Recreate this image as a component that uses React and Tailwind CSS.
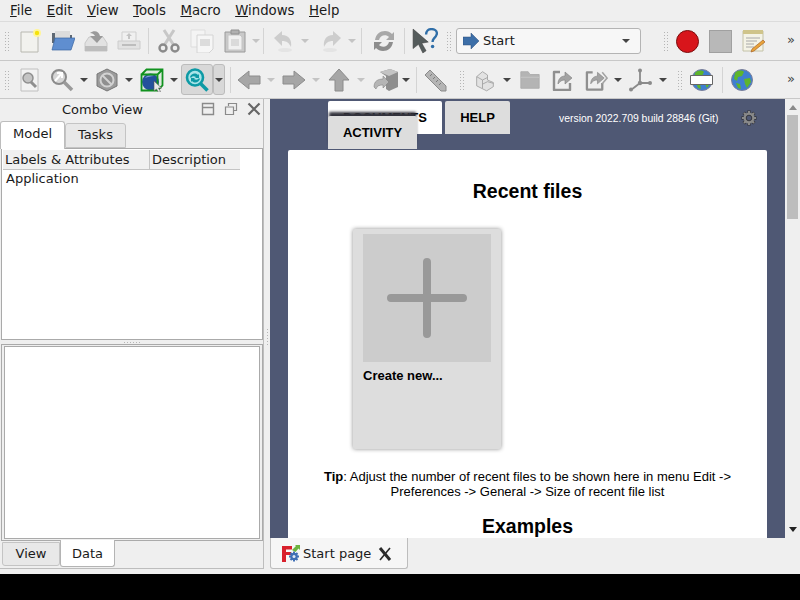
const Slot = ({ className = "w-[33px]", children }) => (
  <div className={`flex shrink-0 items-center justify-center ${className}`}>{children}</div>
);

const Grip = ({ className = "w-[13px]" }) => (
  <Slot className={className}>
    <div className="h-[20px] w-[5px] bg-[radial-gradient(#b5b5b5_1px,transparent_1px)] bg-[length:3px_3px]" />
  </Slot>
);

const Sep = ({ className = "w-[7px]" }) => (
  <Slot className={className}>
    <div className="h-[26px] w-px bg-[#d4d4d4]" />
  </Slot>
);

const Arrow = ({ className = "w-[9px]", light = false }) => (
  <Slot className={className}>
    <div
      className={`h-0 w-0 border-x-[4px] border-t-[4px] border-x-transparent ${
        light ? "border-t-[#c4c4c4]" : "border-t-[#444444]"
      }`}
    />
  </Slot>
);

const Svg = ({ children, w = 24, h = 24 }) => (
  <svg width={w} height={h} viewBox="0 0 24 24">{children}</svg>
);

const NewIcon = () => (
  <Svg>
    <path d="M3 3h17v20H3z" fill="#f2f2ee" stroke="#b8b8b0" />
    <circle cx="19" cy="4" r="4" fill="#fff59a" />
    <circle cx="19" cy="4" r="2.200" fill="#f5e20a" />
  </Svg>
);
const OpenIcon = () => (
  <Svg>
    <path d="M1 4h8l2 2h10v8H1z" fill="#5e6874" />
    <path d="M4 2h15v10H4z" fill="#dcdcdc" />
    <path d="M1 21 4 9h20l-4 12z" fill="#5f8ed0" stroke="#3b65a0" strokeWidth=".7" />
  </Svg>
);
const SaveIcon = () => (
  <Svg>
    <path d="M1 14 5 8h14l4 6v8H1z" fill="#e2e2e2" stroke="#c8c8c8" />
    <path d="M1 17h22v5H1z" fill="#bdbdbd" />
    <path d="M6 4c4-3 9-2 10 3l3 0-6 7-7-7h5c-1-2-3-3-5-3z" fill="#9a9a9a" />
  </Svg>
);
const PrintIcon = () => (
  <Svg>
    <path d="M5 3h14v10H5z" fill="#f0f0f0" stroke="#cfcfcf" />
    <path d="M12 4l3 3h-2v3h-2V7H9z" fill="#c4c4c4" />
    <path d="M1 12h22v8H1z" fill="#e2e2e2" stroke="#cccccc" />
    <path d="M5 15h14v2H5z" fill="#bdbdbd" />
  </Svg>
);
const CutIcon = () => (
  <Svg>
    <path d="M7 1l9 14M17 1 8 15" stroke="#c7c7c7" strokeWidth="3" fill="none" />
    <circle cx="6" cy="19" r="3.500" fill="none" stroke="#8a8a8a" strokeWidth="2.400" />
    <circle cx="18" cy="19" r="3.500" fill="none" stroke="#8a8a8a" strokeWidth="2.400" />
  </Svg>
);
const CopyIcon = () => (
  <Svg>
    <path d="M1 1h14v17H1z" fill="#f4f4f4" stroke="#dddddd" />
    <path d="M7 6h16v14l-4 4H7z" fill="#f6f6f6" stroke="#d4d4d4" />
    <path d="M10 10h10v7H10z" fill="#dcdcdc" />
  </Svg>
);
const PasteIcon = () => (
  <Svg>
    <path d="M2 3h20v20H2z" fill="#c9c9c9" stroke="#9a9a9a" />
    <path d="M5 6h12l2 2v13H5z" fill="#f0f0f0" stroke="#c5c5c5" />
    <path d="M8 1h8v4H8z" fill="#b0b0b0" stroke="#909090" />
    <path d="M8 10h8v7H8z" fill="#dadada" />
  </Svg>
);
const UndoIcon = ({ flip = false }) => (
  <Svg>
    <g transform={flip ? "translate(24 0) scale(-1 1)" : undefined}>
      <path d="M2 9 10 2v4c7 0 10 5 9 12-2-4-4-6-9-6v5z" fill="#cdcdcd" />
      <ellipse cx="13" cy="21" rx="7" ry="2" fill="#e4e4e4" />
    </g>
  </Svg>
);
const RefreshIcon = () => (
  <Svg>
    <path d="M3 11C4 5 8 2 13 2c3 0 5 1 7 3l2-2v8h-8l3-3c-3-3-9-2-10 3z" fill="#a8a8a8" />
    <path d="M21 13c-1 6-5 9-10 9-3 0-5-1-7-3l-2 2v-8h8l-3 3c3 3 9 2 10-3z" fill="#8d8d8d" />
  </Svg>
);
const WhatsThis = () => (
  <Svg w={26} h={26}>
    <path d="M1 1 1 19l5-4 4 8 3-2-4-7 6-1z" fill="#555c5c" stroke="#3d3d3d" strokeWidth=".5" />
    <path d="M13 6c0-3 2-5 5-5s5 2 5 4-1 3-3 5c-1 1-1 2-1 3" fill="none" stroke="#2f6ea8" strokeWidth="2.200" />
    <circle cx="19" cy="17" r="1.600" fill="#2f6ea8" />
  </Svg>
);
const StartArrow = () => (
  <svg width="16" height="16" viewBox="0 0 16 16">
    <path d="M0 4h8V0l8 8-8 8v-4H0z" fill="#3d6fa8" stroke="#2d4f7a" strokeWidth=".5" />
  </svg>
);
const MacroIcon = () => (
  <Svg>
    <path d="M1 2h20v20H1z" fill="#f4f3e6" stroke="#c4c2a8" />
    <path d="M1 1h20v4H1z" fill="#cfc48a" />
    <path d="M4 9h14M4 12h11M4 15h8M4 18h8" stroke="#a8a8a8" />
    <path d="M10 20 21 11l2 2-11 9-3 1z" fill="#e8a33a" stroke="#a0561c" strokeWidth=".6" />
  </Svg>
);
const FitAll = () => (
  <Svg>
    <path d="M3 1h17v22H3z" fill="#f2f2f2" stroke="#c0c0c0" />
    <circle cx="10" cy="10" r="5" fill="#c4c4c4" stroke="#8f8f8f" strokeWidth="1.500" />
    <path d="M13 14l5 5" stroke="#8f8f8f" strokeWidth="3" />
  </Svg>
);
const ZoomSel = () => (
  <Svg>
    <circle cx="9" cy="9" r="7" fill="#d6d6d6" stroke="#8b8b8b" strokeWidth="2" />
    <path d="M14 14l8 8" stroke="#9a9a9a" strokeWidth="3.500" />
    <path d="M5 13 12 5M7 5h5v5" stroke="#fff" strokeWidth="2" fill="none" />
  </Svg>
);
const NoIcon = () => (
  <Svg>
    <path d="M12 1 22 6v12l-10 5-10-5V6z" fill="#9b9b9b" stroke="#777777" />
    <circle cx="12" cy="12" r="6.500" fill="#8f8f8f" stroke="#d2d2d2" strokeWidth="2" />
    <path d="M7.500 7.500l9 9" stroke="#d2d2d2" strokeWidth="2" />
  </Svg>
);
const CubeIcon = () => (
  <Svg>
    <path d="M1.500 6.500l5-5h16v16l-5 5h-16z" fill="#dfeadf" />
    <circle cx="10.500" cy="14" r="8.500" fill="#24509c" />
    <path d="M5 10c2-3 6-4 9-2-3 0-6 1-9 2z" fill="#7b9bd8" />
    <path d="M1.500 6.500h16v16h-16zM1.500 6.500l5-5h16v16l-5 5M17.500 6.500l5-5" stroke="#11921f" strokeWidth="1.800" fill="none" />
    <path d="M14 13v10l2.500-2 2 3.500 2-1-2-3.500h3z" fill="#e8e8e8" stroke="#555" strokeWidth=".6" />
  </Svg>
);
const SyncIcon = () => (
  <Svg>
    <circle cx="10" cy="9.500" r="8" fill="#a8e4e8" stroke="#0d9aa5" strokeWidth="2.600" />
    <path d="M5 9c1-3 5-5 8-2l1-1v4h-4l1-1c-2-1-4-1-5 1z" fill="#0d9aa5" />
    <path d="M15 11c-1 3-5 5-8 2l-1 1v-4h4l-1 1c2 1 4 1 5-1z" fill="#0d9aa5" />
    <path d="M15.500 15.500l7 7" stroke="#0d9aa5" strokeWidth="3.600" />
  </Svg>
);
const NavArrow = ({ d }) => (
  <Svg>
    <path d={d} fill="#a6a6a6" stroke="#8c8c8c" />
  </Svg>
);
const ViewBox = () => (
  <Svg w={26} h={24}>
    <path d="M7 4l10-3 8 3v15l-9 4-3-2V8z" fill="#8e8e8e" />
    <path d="M7 4l9 4 9-4-8-3z" fill="#c4c4c4" />
    <path d="M1 19c0-6 4-8 9-8V8l6 6-6 6v-3c-4 0-6 1-7 4z" fill="#b5b5b5" stroke="#777" strokeWidth=".5" />
  </Svg>
);
const Ruler = () => (
  <Svg>
    <path d="M2 7 7 2l16 16v5h-5z" fill="#b4b4b4" stroke="#8b8b8b" />
    <path d="M7 8l2-2M10 11l2-2M13 14l2-2M16 17l2-2" stroke="#7c7c7c" />
  </Svg>
);
const PartIcon = () => (
  <Svg>
    <path d="M2 8l7-6 6 4v6l7 3v5l-8 5-12-6z" fill="#e2e2e2" stroke="#9f9f9f" />
    <path d="M2 8l7 4v10M9 12l6-3M9 17l6-3 7 2" stroke="#9f9f9f" fill="none" />
  </Svg>
);
const FolderIcon = () => (
  <Svg>
    <path d="M2 3h8l2 3h10v15H2z" fill="#b4b4b4" stroke="#adadad" />
    <path d="M2 9h20" stroke="#c8c8c8" />
  </Svg>
);
const LinkIcon = ({ double = false }) => (
  <svg width={double ? 24 : 22} height="22" viewBox={double ? "0 0 24 22" : "0 0 22 22"}>
    <path d="M8 3H2v18h16v-7" fill="none" stroke="#8f8f8f" strokeWidth="2.400" strokeLinejoin="round" />
    <path d="M6 15c0-5 3-8 7-8V3l7 6-7 6v-4c-3 0-5 1-7 4z" fill="#a3a3a3" stroke="#7e7e7e" strokeWidth=".6" />
    {double && <path d="M18 3l5 6-5 6" fill="none" stroke="#a3a3a3" strokeWidth="1.600" />}
  </svg>
);
const AxisIcon = () => (
  <Svg>
    <path d="M12 2v13L3 22M12 15l10 0" fill="none" stroke="#8a8a8a" strokeWidth="1.800" />
    <circle cx="12" cy="2.500" r="2" fill="#8a8a8a" />
    <circle cx="12" cy="15" r="2.200" fill="#8a8a8a" />
    <circle cx="3" cy="21.500" r="2" fill="#8a8a8a" />
    <circle cx="22" cy="15" r="2" fill="#8a8a8a" />
  </Svg>
);
const Globe = ({ label = false }) => (
  <Svg>
    <circle cx="12" cy="12" r="10.500" fill="#3f7fd0" stroke="#7a7f9a" />
    <path d="M5 5c3-3 7-3 9-1l-2 4-4 1-1 4-3-2zM14 11l6-1 1 4-4 6-2-4zM6 15l4 1 1 5-3-1z" fill="#5eb52c" />
    {label && <path d="M0.500 7.500h22v9h-22z" fill="#fff" stroke="#666" />}
  </Svg>
);
const Gear = () => (
  <svg width="16" height="16" viewBox="0 0 16 16">
    <path d="M8 .500v15M.500 8h15M2.700 2.700l10.600 10.600M13.300 2.700 2.700 13.300" stroke="#303036" strokeWidth="3.400" />
    <path d="M8 1v14M1 8h14M3 3l10 10M13 3 3 13" stroke="#8a8a8a" strokeWidth="2.200" />
    <circle cx="8" cy="8" r="5.500" fill="#8a8a8a" />
    <circle cx="8" cy="8" r="2.800" fill="#4f5874" stroke="#303036" strokeWidth=".9" />
  </svg>
);
const AppLogo = () => (
  <svg width="18" height="17" viewBox="0 0 18 17">
    <path d="M0 1h10v3.500H4V7h5v3H4v7H0z" fill="#d8202c" />
    <path d="M12 6.500v10M7 11.500h10M8.500 8l7 7M15.500 8l-7 7" stroke="#3f6fb5" strokeWidth="2" />
    <circle cx="12" cy="11.500" r="3.700" fill="#3f6fb5" />
    <circle cx="12" cy="11.500" r="1.500" fill="#dfe8f5" />
    <path d="M10 5l4-4-1-1h5v5l-1.500-1.500L13.500 7z" fill="#6cb33f" />
  </svg>
);

const Toolbar1 = () => (
  <div className="flex h-[39px] items-center border-b border-[#c8c8c8]">
    <Grip />
    <Slot><NewIcon /></Slot>
    <Slot><OpenIcon /></Slot>
    <Slot><SaveIcon /></Slot>
    <Slot><PrintIcon /></Slot>
    <Sep />
    <Slot><CutIcon /></Slot>
    <Slot><CopyIcon /></Slot>
    <Slot><PasteIcon /></Slot>
    <Arrow light />
    <Sep />
    <Slot><UndoIcon /></Slot>
    <Arrow light />
    <Slot className="ml-[5px] w-[33px]"><UndoIcon flip /></Slot>
    <Arrow light />
    <Sep className="w-[11px]" />
    <Slot><RefreshIcon /></Slot>
    <Sep className="w-[8px]" />
    <Slot><WhatsThis /></Slot>
    <Grip className="w-[15px]" />
    <div className="flex h-[26px] w-[185px] shrink-0 items-center rounded-[3px] border border-[#b4b4b4] bg-[#f7f7f7] pl-[6px] pr-[10px]">
      <StartArrow />
      <span className="ml-[4px] flex-1">Start</span>
      <div className="h-0 w-0 border-x-[4px] border-t-[4px] border-x-transparent border-t-[#444444]" />
    </div>
    <Grip className="ml-[18px] w-[12px]" />
    <Slot>
      <div className="size-[23px] rounded-full border border-[#7c0d0d] bg-[#d8151b]" />
    </Slot>
    <Slot>
      <div className="size-[23px] border border-[#a0a0a0] bg-[#b8b8b8]" />
    </Slot>
    <Slot><MacroIcon /></Slot>
    <span className="mb-[2px] ml-auto mr-[5px] text-[#444444]">»</span>
  </div>
);

const Toolbar2 = () => (
  <div className="flex h-[38px] items-center border-b border-[#c8c8c8]">
    <Grip />
    <Slot><FitAll /></Slot>
    <Slot className="w-[32px]"><ZoomSel /></Slot>
    <Arrow className="w-[12px]" />
    <Slot className="w-[34px]"><NoIcon /></Slot>
    <Arrow className="w-[10px]" />
    <Slot className="w-[36px]"><CubeIcon /></Slot>
    <Arrow className="w-[8px]" />
    <div className="ml-[3px] flex h-[31px] w-[32px] shrink-0 items-center justify-center rounded-[3px] border border-[#bcbcbc] bg-[#d8d8d8]">
      <SyncIcon />
    </div>
    <div className="flex h-[31px] w-[12px] shrink-0 items-center justify-center rounded-[3px] border border-[#bcbcbc] bg-[#d8d8d8]">
      <div className="h-0 w-0 border-x-[4px] border-t-[4px] border-x-transparent border-t-[#444444]" />
    </div>
    <Sep className="w-[10px]" />
    <Slot className="w-[28px]"><NavArrow d="M1 12 12 3v5h11v8H12v5z" /></Slot>
    <Arrow className="w-[16px]" light />
    <Slot className="w-[30px]"><NavArrow d="M23 12 12 3v5H1v8h11v5z" /></Slot>
    <Arrow className="w-[14px]" light />
    <Slot className="w-[32px]"><NavArrow d="M12 1l10 11h-6v11H8V12H2z" /></Slot>
    <Arrow className="w-[12px]" light />
    <Slot className="w-[36px]"><ViewBox /></Slot>
    <Arrow className="w-[6px]" />
    <Sep className="w-[14px]" />
    <Slot className="w-[24px]"><Ruler /></Slot>
    <Grip className="w-[28px]" />
    <Slot className="w-[20px]"><PartIcon /></Slot>
    <Arrow className="w-[24px]" />
    <Slot className="w-[22px]"><FolderIcon /></Slot>
    <Slot className="ml-[11px] w-[22px]"><LinkIcon /></Slot>
    <Slot className="ml-[11px] w-[23px]"><LinkIcon double /></Slot>
    <Arrow className="w-[20px]" />
    <Slot className="w-[24px]"><AxisIcon /></Slot>
    <Arrow className="w-[22px]" />
    <Grip className="w-[10px]" />
    <Slot className="w-[36px]"><Globe label /></Slot>
    <Sep className="w-[4px]" />
    <Slot className="w-[36px]"><Globe /></Slot>
    <span className="mb-[2px] ml-auto mr-[5px] text-[#444444]">»</span>
  </div>
);

const ComboPanel = () => (
  <div className="flex h-[470px] w-[264px] shrink-0 flex-col border-r border-b border-[#bdbdbd]">
    <div className="relative flex h-[21px] shrink-0 items-center pl-[62px] text-[13px]">
      <span>Combo View</span>
      <div className="absolute right-[2px] top-[3px] flex items-center gap-[9px] text-[#7a7a7a]">
        <svg width="14" height="14" viewBox="0 0 14 14" fill="none" stroke="#8a8a8a" strokeWidth="1.400">
          <path d="M1.500 1.500h11v11h-11zM1.500 5.500h11" />
        </svg>
        <svg width="14" height="14" viewBox="0 0 14 14" fill="none" stroke="#8a8a8a" strokeWidth="1.200">
          <path d="M4.500 4V1.500h8v7H10M1.500 5h8v7.500h-8z" />
        </svg>
        <svg width="14" height="14" viewBox="0 0 14 14" fill="none" stroke="#666666" strokeWidth="2.200">
          <path d="M1.500 1.500l11 11M12.500 1.500l-11 11" />
        </svg>
      </div>
    </div>
    <div className="flex h-[28px] shrink-0 items-end text-[13px]">
      <div className="z-10 -mb-px flex h-[28px] w-[65px] items-center justify-center rounded-t-[3px] border border-b-0 border-[#bdbdbd] bg-white pb-[3px]">
        Model
      </div>
      <div className="flex h-[25px] w-[61px] items-center justify-center rounded-t-[3px] border border-[#c4c4c4] bg-[#e8e8e8] pb-[2px]">
        Tasks
      </div>
    </div>
    <div className="ml-[1px] flex h-[192px] w-[262px] shrink-0 flex-col border border-[#aaaaaa] bg-white px-px pt-px text-[13px]">
      <div className="flex h-[20px] items-center">
        <div className="flex h-full w-[147px] items-center border-r border-b border-[#c4c4c4] bg-[#f0f0f0] pl-[2px]">
          Labels &amp; Attributes
        </div>
        <div className="flex h-full w-[90px] items-center border-b border-[#c4c4c4] bg-[#f0f0f0] pl-[2px]">Description</div>
      </div>
      <div className="-mt-px pl-[3px]">Application</div>
    </div>
    <div className="flex h-[4px] shrink-0 items-center justify-center">
      <div className="h-[3px] w-[17px] bg-[radial-gradient(#b5b5b5_1px,transparent_1px)] bg-[length:3px_3px]" />
    </div>
    <div className="ml-[1px] h-[197px] w-[262px] shrink-0 border border-[#aaaaaa] px-[2px] py-px">
      <div className="h-full border border-[#aaaaaa] bg-white" />
    </div>
    <div className="flex items-start pl-[2px] text-[13px]">
      <div className="mt-px flex h-[24px] w-[58px] items-center justify-center rounded-b-[3px] border border-[#c4c4c4] bg-[#e8e8e8]">
        View
      </div>
      <div className="z-10 -mt-px flex h-[27px] w-[55px] items-center justify-center rounded-b-[3px] border border-t-0 border-[#b4b4b4] bg-white pt-[2px]">
        Data
      </div>
    </div>
  </div>
);

const StartPage = () => (
  <div className="flex h-[439px] w-full shrink-0 overflow-hidden">
    <div className="relative min-w-0 flex-1 overflow-hidden bg-[#4f5874] pl-[18px] pr-[18px] font-['Liberation_Sans',sans-serif] text-black">
      <div className="flex h-[51px] items-start pl-[40px] pt-[2px] text-[13px] font-bold">
        <div className="flex h-[33px] w-[114px] items-center justify-center rounded-t-[2px] bg-white">
          DOCUMENTS
        </div>
        <div className="ml-[3px] flex h-[33px] w-[65px] items-center justify-center rounded-t-[2px] bg-[#dddddd]">
          HELP
        </div>
        <span className="ml-[49px] mt-[10px] text-[10.4px] font-normal text-white">
          version 2022.709 build 28846 (Git)
        </span>
        <div className="ml-[23px] mt-[9px]"><Gear /></div>
      </div>
      <div className="absolute left-[58px] top-[17px] flex h-[33px] w-[89px] items-center justify-center rounded-t-[2px] bg-[#dddddd] text-[13px] font-bold shadow-[0_-5px_3px_-1px_rgba(50,50,60,1)]">
        ACTIVITY
      </div>
      <div className="h-[500px] rounded-t-[2px] bg-white px-[21px]">
        <h2 className="pt-[29px] text-center text-[19.5px] font-bold leading-[24px]">Recent files</h2>
        <div className="ml-[44px] mt-[26px] h-[220px] w-[148px] rounded-[2px] bg-[#dddddd] px-[10px] pt-[5px] shadow-[0_0_4px_rgba(0,0,0,0.45)]">
          <div className="flex h-[128px] w-[128px] items-center justify-center bg-[#cccccc]">
            <svg width="80" height="80" viewBox="0 0 80 80">
              <path d="M40 4v72M4 40h72" stroke="#999999" strokeWidth="8" strokeLinecap="round" />
            </svg>
          </div>
          <div className="mt-[6px] text-[13px] font-bold leading-[15px]">Create new...</div>
        </div>
        <p className="mt-[20px] text-center text-[13px] leading-[15px]">
          <b>Tip</b>: Adjust the number of recent files to be shown here in menu Edit -&gt;
          <br />
          Preferences -&gt; General -&gt; Size of recent file list
        </p>
        <h2 className="mt-[15px] text-center text-[19.5px] font-bold leading-[24px]">Examples</h2>
      </div>
    </div>
    <div className="flex w-[15px] shrink-0 flex-col items-center bg-[#efefef]">
      <div className="mt-[6px] h-0 w-0 border-x-[4px] border-b-[5px] border-x-transparent border-b-[#8a8a8a]" />
      <div className="mt-[5px] h-[104px] w-[11px] bg-[#bdbdbd]" />
      <div className="mt-auto mb-[6px] h-0 w-0 border-x-[4px] border-t-[5px] border-x-transparent border-t-[#222222]" />
    </div>
  </div>
);

export default function App() {
  return (
    <div className="flex h-[600px] w-[800px] flex-col overflow-hidden bg-black font-['DejaVu_Sans',sans-serif] text-[13px] text-[#1a1a1a]">
      <div className="h-[574px] bg-[#efefef]">
        <div className="flex h-[22px] items-center gap-[14.5px] border-b border-[#dcdcdc] pl-[10px] text-[13.3px]">
          <span><u>F</u>ile</span>
          <span><u>E</u>dit</span>
          <span><u>V</u>iew</span>
          <span><u>T</u>ools</span>
          <span><u>M</u>acro</span>
          <span><u>W</u>indows</span>
          <span><u>H</u>elp</span>
        </div>
        <Toolbar1 />
        <Toolbar2 />
        <div className="flex">
          <ComboPanel />
          <div className="flex w-[6px] shrink-0 items-start justify-center pt-[229px]">
            <div className="h-[17px] w-[3px] bg-[radial-gradient(#b5b5b5_1px,transparent_1px)] bg-[length:3px_3px]" />
          </div>
          <div className="flex min-w-0 flex-1 flex-col">
            <StartPage />
            <div className="flex h-[31px] w-[138px] shrink-0 items-center rounded-b-[3px] border border-t-0 border-[#bdbdbd] bg-[#f6f6f6] pl-[11px]">
              <AppLogo />
              <span className="ml-[3px] mt-[2px]">Start page</span>
              <svg className="ml-[7px] mt-px" width="14" height="14" viewBox="0 0 14 14" stroke="#2a2a2a" fill="none">
                <path d="M2 1l10 12" strokeWidth="3" />
                <path d="M12 1 2 13" strokeWidth="1.600" />
              </svg>
            </div>
          </div>
        </div>
      </div>
    </div>
  );
}
